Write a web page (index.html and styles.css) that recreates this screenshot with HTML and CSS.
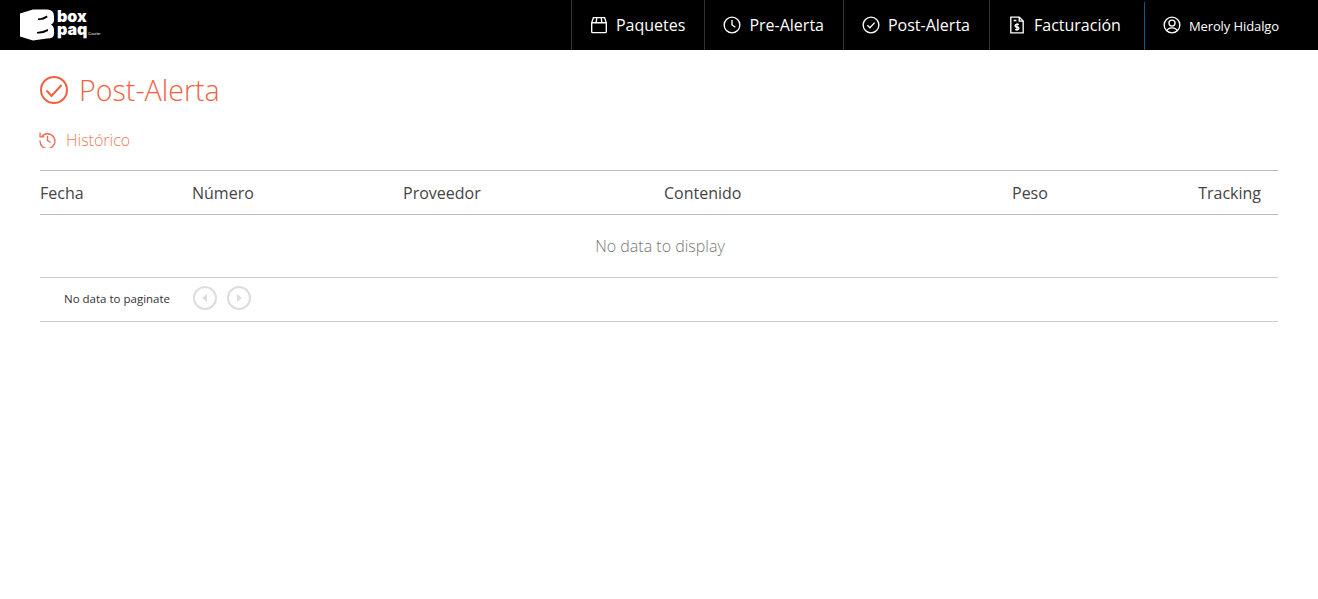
FILE: index.html
```html
<!DOCTYPE html>
<html lang="es">
<head>
    <meta charset="UTF-8">
    <meta name="viewport" content="width=device-width, initial-scale=1.0">
    <title>Post-Alerta</title>
    <link rel="stylesheet" href="styles.css">
</head>
<body>
    <header class="topbar">
        <a class="logo" href="#">
            <svg class="logo-mark" width="34" height="32" viewBox="0 0 34 32">
                <path fill="#fff" d="M0 4.500 13 0.500 H27 Q34 0.500 34 7 V11 Q34 14 31 15.500 Q34 17 34 21 V25 Q34 29.500 27 29.500 L13 31.500 0 27.500 Z"/>
                <path fill="#000" d="M18 9.500 Q23 9 27 6.500 L27.500 8.500 Q23 11.500 18 11 Z M17 23 Q23 22.500 28 20 L28 22 Q23 25 17 24.500 Z"/>
            </svg>
            <span class="logo-text">
                <span>box</span>
                <span>paq<small>Courier</small></span>
            </span>
        </a>
        <nav class="menu">
            <a class="menu-item" href="#">
                <svg class="icon" viewBox="0 0 16 16"><path d="M3 1.500h10l1.500 4.500v8a.8.8 0 0 1-.8.8H2.300a.8.8 0 0 1-.8-.8V6zM1.500 6h13M6 1.500 5.500 6M10 1.500l.5 4.500"/></svg>
                Paquetes
            </a>
            <a class="menu-item" href="#">
                <svg class="icon" viewBox="0 0 16 16"><circle cx="8" cy="8" r="7"/><path d="M8 3.500V8l3 2"/></svg>
                Pre-Alerta
            </a>
            <a class="menu-item" href="#">
                <svg class="icon" viewBox="0 0 16 16"><circle cx="8" cy="8" r="7"/><path d="M4.800 8.300 7 10.500l4.300-4.600"/></svg>
                Post-Alerta
            </a>
            <a class="menu-item menu-bill" href="#">
                <svg class="icon" viewBox="0 0 16 16"><path d="M2.500 1h7.500l3.500 3.500V15h-11zM10 1v3.500h3.500M5 4h2.500"/><path stroke-width="1.200" d="M9.700 7.500H7.500a1 1 0 0 0 0 2.300h1a1 1 0 0 1 0 2.300H6.300M8 6.500v6.500"/></svg>
                Facturación
            </a>
            <a class="menu-item menu-user" href="#">
                <svg class="icon" viewBox="0 0 16 16"><circle cx="8" cy="8" r="7"/><circle cx="8" cy="6.300" r="2.700"/><path d="M3.300 13.200C4 11 6 10.500 8 10.500s4 .5 4.700 2.700"/></svg>
                <span class="user-name">Meroly Hidalgo</span>
            </a>
        </nav>
    </header>

    <main class="content">
        <h1 class="page-title">
            <svg class="title-icon" viewBox="0 0 28 28"><circle cx="14" cy="14" r="13"/><path d="M6.500 14.500 11.500 20 21.500 9"/></svg>
            Post-Alerta
        </h1>
        <a class="history" href="#">
            <svg class="history-icon" viewBox="0 0 16 16"><path d="M2.300 5.500A7 7 0 1 1 1 9M1 1.500v4h4M8 4.500V9l3 1.800"/></svg>
            Histórico
        </a>

        <div class="grid-head">
            <div>Fecha</div>
            <div>Número</div>
            <div>Proveedor</div>
            <div>Contenido</div>
            <div>Peso</div>
            <div class="col-tracking">Tracking</div>
        </div>
        <div class="grid-empty">No data to display</div>
        <div class="pager">
            <span class="pager-info">No data to paginate</span>
            <button class="pager-btn" disabled>
                <svg viewBox="0 0 24 24"><circle cx="12" cy="12" r="11"/><path class="arrow" d="M14 8v8l-5-4z"/></svg>
            </button>
            <button class="pager-btn" disabled>
                <svg viewBox="0 0 24 24"><circle cx="12" cy="12" r="11"/><path class="arrow" d="M10 8v8l5-4z"/></svg>
            </button>
        </div>
    </main>
</body>
</html>
```

FILE: styles.css
```css
body {
    margin: 0;
    font-family: "Open Sans", Arial, sans-serif;
    background-color: #fff;
    color: #333;
}
a {
    text-decoration: none;
    color: inherit;
}
.topbar {
    height: 50px;
    background-color: #000;
    display: flex;
    justify-content: space-between;
}
.logo {
    display: flex;
    align-items: center;
    margin-left: 20px;
    color: #fff;
}
.logo-mark {
    display: block;
    margin-top: -1px;
}
.logo-text {
    display: flex;
    flex-direction: column;
    margin-left: 3px;
    font-family: "Inter", Arial, sans-serif;
    font-size: 16px;
    font-weight: 900;
    line-height: 13px;
}
.logo-text small {
    font-size: 3.500px;
    font-weight: 400;
    margin-left: 1px;
}
.menu {
    display: flex;
    padding-right: 39px;
}
.menu-item {
    display: flex;
    align-items: center;
    gap: 8px;
    padding: 0 19px 0 18px;
    border-left: 1px solid #333;
    color: #fff;
    font-size: 16px;
}
.menu-bill {
    margin-right: 4px;
}
.menu-user {
    border-left: 1px solid #0f5a8c;
    margin-top: 2px;
    padding-bottom: 2px;
    padding-right: 0;
}
.user-name {
    font-size: 13px;
    letter-spacing: -0.1px;
    padding-top: 1px;
}
.icon {
    width: 18px;
    height: 18px;
    fill: none;
    stroke: #fff;
    stroke-width: 1.200;
}
.content {
    padding: 0 40px;
}
.page-title {
    display: flex;
    align-items: center;
    gap: 11px;
    margin: 0;
    padding-top: 22px;
    height: 35px;
    font-size: 28.600px;
    font-weight: 300;
    line-height: 35px;
    color: #f1613f;
}
.title-icon {
    width: 28px;
    height: 28px;
    fill: none;
    stroke: #f1613f;
    stroke-width: 2;
}
.history {
    display: flex;
    align-items: center;
    gap: 10px;
    margin-top: 21px;
    height: 24px;
    font-size: 16px;
    font-weight: 300;
    color: #ee7b5c;
}
.history-icon {
    width: 17px;
    height: 17px;
    margin: -2px 0 0 -1px;
    fill: none;
    stroke: #ee6f5c;
    stroke-width: 1.300;
}
.grid-head {
    display: grid;
    grid-template-columns: 152px 211px 261px 348px 1fr 1fr;
    align-items: center;
    margin-top: 18px;
    height: 43px;
    border-top: 1px solid #bbb;
    border-bottom: 1px solid #bbb;
    font-size: 16px;
    color: #444;
}
.col-tracking {
    text-align: right;
    padding-right: 17px;
}
.grid-empty {
    height: 62px;
    line-height: 62px;
    padding-left: 2px;
    text-align: center;
    font-size: 16px;
    font-weight: 300;
    color: #777;
    border-bottom: 1px solid #ccc;
}
.pager {
    display: flex;
    align-items: center;
    height: 41px;
    padding-bottom: 2px;
    border-bottom: 1px solid #ccc;
}
.pager-info {
    width: 153px;
    padding-left: 24px;
    box-sizing: border-box;
    font-size: 11.500px;
    color: #333;
}
.pager-btn {
    width: 24px;
    height: 24px;
    padding: 0;
    margin: 0 10px 2px 0;
    border: none;
    background: none;
}
.pager-btn svg {
    display: block;
    fill: none;
    stroke: #ddd;
    stroke-width: 2;
}
.pager-btn .arrow {
    fill: #ddd;
    stroke: none;
}
```
